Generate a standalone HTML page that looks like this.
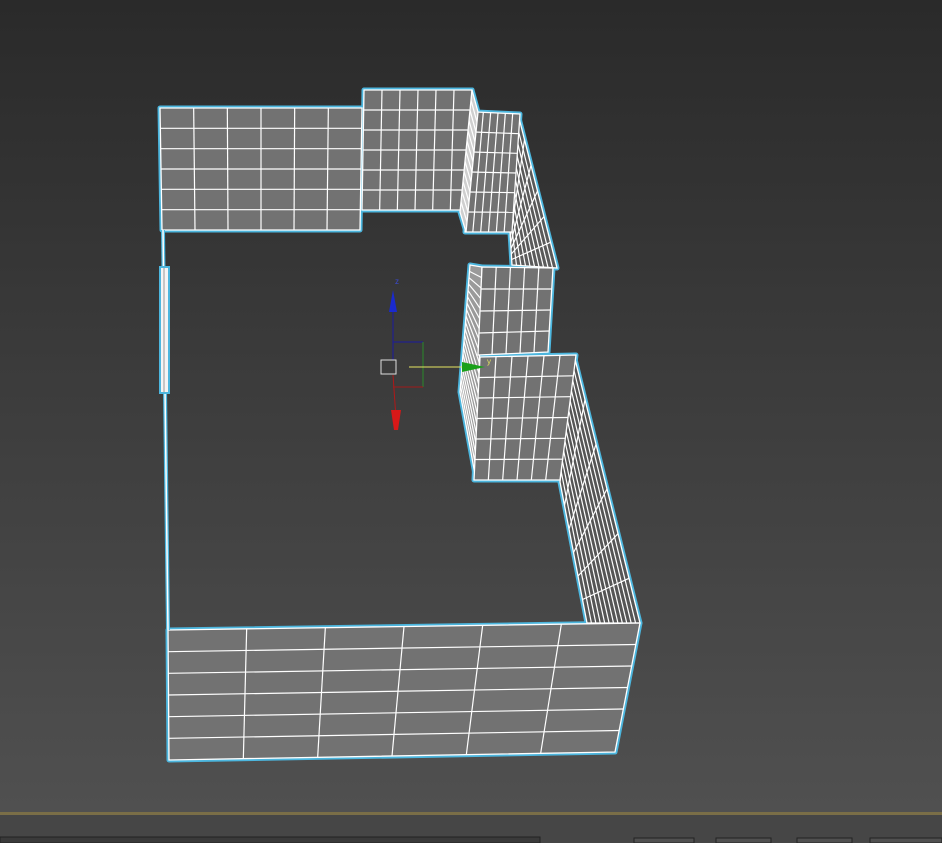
<!DOCTYPE html>
<html><head><meta charset="utf-8"><style>
html,body{margin:0;padding:0;width:942px;height:843px;overflow:hidden;background:#3a3a3a}
svg{display:block}
</style></head><body>
<svg id="s" width="942" height="843" viewBox="0 0 942 843" xmlns="http://www.w3.org/2000/svg">
<defs>
<linearGradient id="bg" x1="0" y1="0" x2="0" y2="1">
<stop offset="0" stop-color="#2a2a2a"/><stop offset="1" stop-color="#505050"/>
</linearGradient>
</defs>
<rect x="0" y="0" width="942" height="812" fill="url(#bg)"/>
<rect x="0" y="812" width="942" height="3" fill="#7a6e47"/>
<rect x="0" y="815" width="942" height="28" fill="#464646"/>
<rect x="0" y="837" width="540" height="6" fill="#3a3a3a" stroke="#222" stroke-width="1"/>
<rect x="634" y="838" width="60" height="5" fill="#505050" stroke="#222"/>
<rect x="716" y="838" width="55" height="5" fill="#505050" stroke="#222"/>
<rect x="797" y="838" width="55" height="5" fill="#505050" stroke="#222"/>
<rect x="870" y="838" width="72" height="5" fill="#505050" stroke="#222"/>
<g id="cy" fill="none" stroke="#4cb6de" stroke-width="5" stroke-linejoin="round"></g>
<g id="fc"></g>
<line x1="163" y1="230" x2="168" y2="630" stroke="#4cb6de" stroke-width="4"/>
<line x1="163" y1="230" x2="168" y2="630" stroke="#fff" stroke-width="1.5"/>
<rect x="159" y="266" width="11" height="128" fill="#4cb6de"/>
<rect x="161" y="268" width="7" height="124" fill="#f4f4f4"/>
<line x1="164" y1="268" x2="164" y2="392" stroke="#999" stroke-width="1"/>
<g fill="none" stroke-width="1">
<line x1="393" y1="300" x2="393" y2="360" stroke="#1a1aa0"/>
<polyline points="393,342 423,342" stroke="#1a1aa0"/>
<polyline points="423,342 423,387" stroke="#2a8a2a"/>
<polyline points="393,387 423,387" stroke="#a01a1a"/>
<line x1="393" y1="375" x2="396" y2="418" stroke="#b01818"/>
<line x1="409" y1="367" x2="465" y2="367" stroke="#e6e660"/>
<rect x="381" y="360" width="15" height="14" stroke="#ddd"/>
</g>
<polygon points="393,290 389,312 397,312" fill="#1a2ad0"/>
<polygon points="391,410 401,410 398,430 394,430" fill="#d81818"/>
<polygon points="462,362 485,367 462,372" fill="#1aa01a"/>
<text x="395" y="284" font-family="Liberation Sans,sans-serif" font-size="8" fill="#3a4ad0">z</text>
<text x="487" y="364" font-family="Liberation Sans,sans-serif" font-size="8" fill="#e0e060">y</text>
</svg>
<script>
var NS="http://www.w3.org/2000/svg";
var cy=document.getElementById("cy"),fc=document.getElementById("fc");
function L(a,b,t){return [a[0]+(b[0]-a[0])*t,a[1]+(b[1]-a[1])*t];}
function el(n,at,p){var e=document.createElementNS(NS,n);for(var k in at)e.setAttribute(k,at[k]);p.appendChild(e);return e;}
function pts(q){return q.map(function(p){return p.join(",")}).join(" ");}
function quad(q,c,r,fill){
 el("polygon",{points:pts(q)},cy);
 el("polygon",{points:pts(q),fill:fill||"#727272",stroke:"#fff","stroke-width":"1.3"},fc);
 for(var i=1;i<c;i++){var a=L(q[0],q[1],i/c),b=L(q[3],q[2],i/c);el("line",{x1:a[0],y1:a[1],x2:b[0],y2:b[1],stroke:"#fff","stroke-width":"1.2"},fc);}
 for(var j=1;j<r;j++){var a=L(q[0],q[3],j/r),b=L(q[1],q[2],j/r);el("line",{x1:a[0],y1:a[1],x2:b[0],y2:b[1],stroke:"#fff","stroke-width":"1.2"},fc);}
}
quad([[160,108],[362,108],[360,230],[162,230]],6,6);
quad([[364,90],[472,90],[468,210],[362,210]],6,6);
quad([[518,114],[510,232],[512,265],[557,268]],10,6,"#5a5a5a");
quad([[476,112],[520,114],[512,232],[465,232]],6,6);
quad([[472,90],[478,112],[466,232],[460,212]],1,12,"#cfcfcf");
quad([[470,265],[482,267],[476,480],[460,392]],1,20,"#9a9a9a");
quad([[482,267],[553,268],[548,352],[478,355]],5,4);
quad([[574,355],[560,482],[587,623],[640,623]],12,6,"#555555");
quad([[480,357],[576,355],[560,480],[474,480]],6,6);
quad([[168,630],[640,623],[615,752],[169,760]],6,6);
</script>
</body></html>
